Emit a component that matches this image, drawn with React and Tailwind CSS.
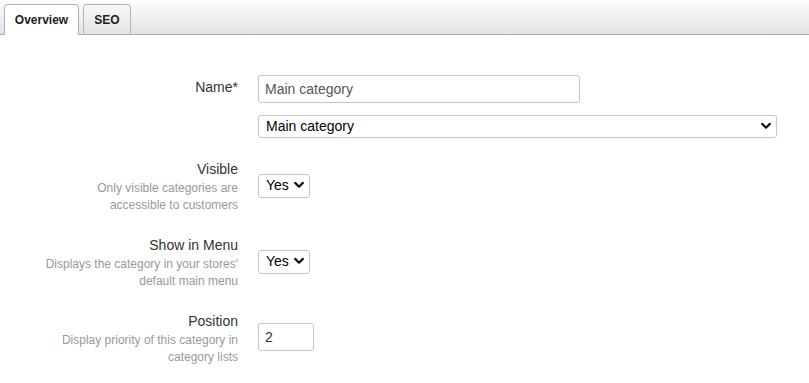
import React from "react";

function Chevron() {
  return (
    <svg width="10" height="7" viewBox="0 0 10 7" className="pointer-events-none absolute right-[6px] top-1/2 -translate-y-1/2">
      <path d="M1.2 1.4 L5 5.2 L8.8 1.4" fill="none" stroke="#111" strokeWidth="2.2" strokeLinecap="round" strokeLinejoin="round" />
    </svg>
  );
}

function Select({ value, className }) {
  return (
    <div className={"relative " + className}>
      <select
        defaultValue={value}
        className="h-full w-full appearance-none rounded-[3px] border border-[#c6c6c6] bg-white pl-[7px] pr-[20px] text-[14px] text-black outline-none"
        style={{ fontFamily: '"Liberation Sans", Arial, sans-serif' }}
      >
        <option>{value}</option>
      </select>
      <Chevron />
    </div>
  );
}

function Row({ label, desc, children, className, labelClass }) {
  return (
    <div className={"flex " + (className || "")}>
      <div className="w-[238px] shrink-0 text-right">
        <div className={"text-[14px] leading-[20px] text-[#333] " + (labelClass || "")}>{label}</div>
        {desc && (
          <div className="mt-[1px] text-[12px] leading-[17px] text-[#999]">
            {desc.map((l, i) => (
              <div key={i}>{l}</div>
            ))}
          </div>
        )}
      </div>
      <div className="ml-[20px]">{children}</div>
    </div>
  );
}

export default function App() {
  return (
    <div
      className="h-[383px] w-[809px] overflow-hidden bg-white"
      style={{ fontFamily: '"Liberation Sans", Arial, sans-serif' }}
    >
      <div className="flex h-[35px] items-end border-b border-[#acacac] bg-gradient-to-b from-[#fdfdfd] to-[#e3e3e3] pl-[4px]">
        <div className="relative -mb-px flex h-[31px] w-[75px] items-center justify-center rounded-t-[4px] border border-b-0 border-[#b4b4b4] bg-white text-[12px] font-bold text-[#222]">
          Overview
        </div>
        <div className="ml-[4px] flex h-[30px] w-[48px] items-center justify-center rounded-t-[4px] border border-b-0 border-[#b4b4b4] bg-gradient-to-b from-[#f7f7f7] to-[#e4e4e4] text-[12px] font-bold text-[#222]">
          SEO
        </div>
      </div>

      <div className="pt-[40px]">
        <Row label="Name*" labelClass="pt-[2px]">
          <div>
            <input
              defaultValue="Main category"
              className="block h-[28px] w-[322px] rounded-[3px] border border-[#c6c6c6] px-[6px] text-[14px] text-[#555] outline-none"
            />
            <Select value="Main category" className="mt-[11px] h-[23px] w-[519px]" />
          </div>
        </Row>

        <Row
          className="mt-[22px]"
          label="Visible"
          desc={["Only visible categories are", "accessible to customers"]}
        >
          <Select value="Yes" className="mt-[14px] h-[24px] w-[52px]" />
        </Row>

        <Row
          className="mt-[21px]"
          label="Show in Menu"
          desc={["Displays the category in your stores'", "default main menu"]}
        >
          <Select value="Yes" className="mt-[14px] h-[24px] w-[52px]" />
        </Row>

        <Row
          className="mt-[21px]"
          label="Position"
          desc={["Display priority of this category in", "category lists"]}
        >
          <input
            defaultValue="2"
            className="mt-[12px] block h-[28px] w-[56px] rounded-[3px] border border-[#c6c6c6] px-[6px] text-[14px] text-[#333] outline-none"
          />
        </Row>
      </div>
    </div>
  );
}
